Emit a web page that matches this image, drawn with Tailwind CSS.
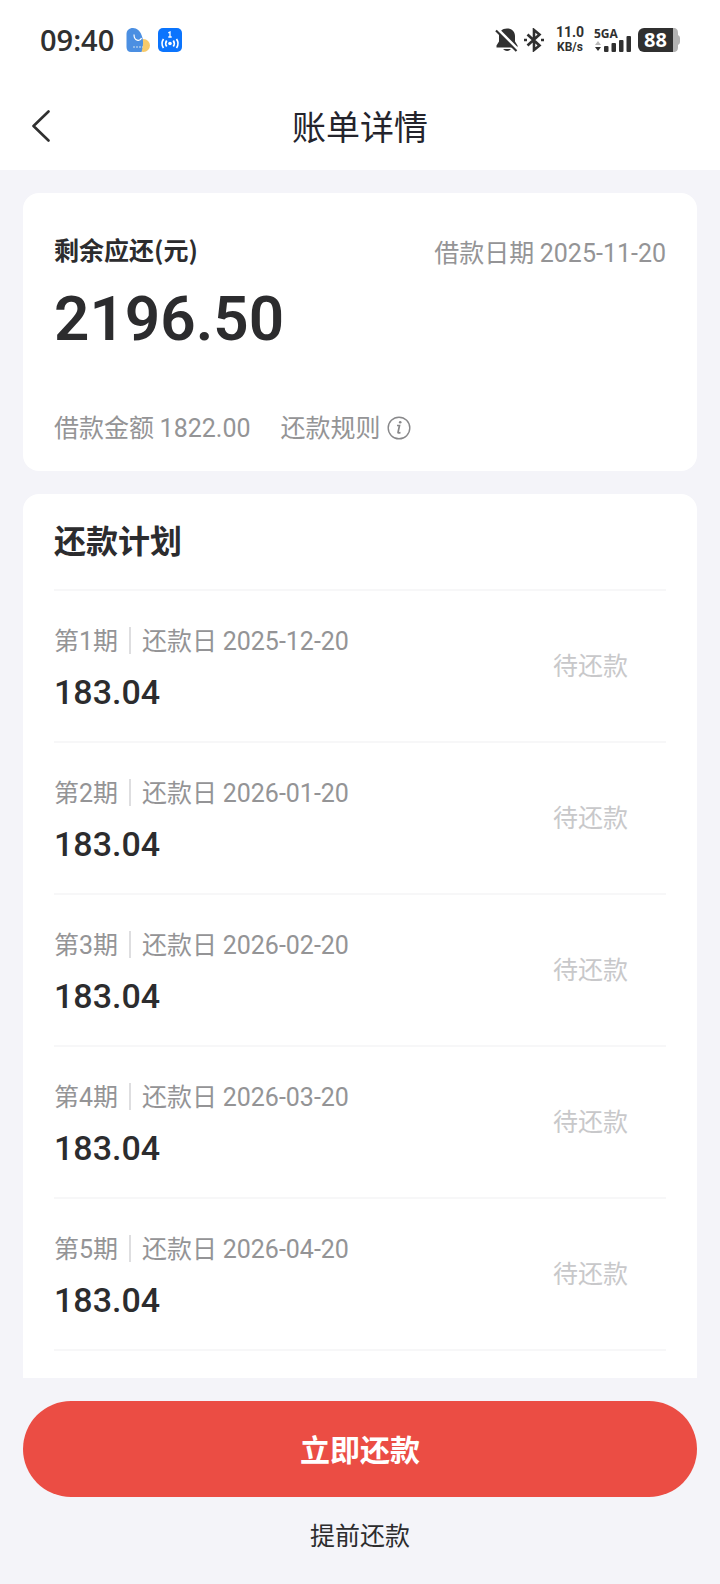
<!DOCTYPE html>
<html lang="zh-CN">
<head>
  <meta charset="UTF-8" />
  <meta name="viewport" content="width=device-width, initial-scale=1" />
  <title>账单详情</title>
  <script src="https://cdn.jsdelivr.net/npm/@tailwindcss/browser@4"></script>
  <style>
    body {
      font-family: 'Noto Sans CJK SC', sans-serif;
    }
  </style>
</head>
<body class="bg-[#f4f4f9] h-screen flex flex-col overflow-hidden text-[#2c2c2e]">
  <header class="bg-white shrink-0">
    <!-- Status bar -->
    <div class="h-20 px-10 flex items-center justify-between font-['Open_Sans',sans-serif] text-[#303030]">
      <div class="flex items-center">
        <span class="text-[29px] font-semibold leading-8">09:40</span>
        <svg class="w-6 h-6 ml-3" viewBox="0 0 24 24">
          <circle cx="17.500" cy="17.500" r="6.500" fill="#f7ca6b" />
          <path d="M7 0C11 0 14 3 15.500 7C17 11 18 15 15.500 24H5C2 24 0.500 22 0.500 19V6C0.500 2.500 3 0 7 0Z" fill="#4b8fe2" />
          <path d="M8 6.500C8 13 14 14 15.500 10" fill="none" stroke="#fff" stroke-width="1.200" />
          <path d="M7 19H17" stroke="#d5e3ef" stroke-width="1" stroke-dasharray="2 1" />
        </svg>
        <svg class="w-6 h-6 ml-2" viewBox="0 0 24 24">
          <rect width="24" height="24" rx="5" fill="#0b74fd" />
          <path d="M10.300 4.800L12 4V9M10.300 9H13.700" fill="none" stroke="#fff" stroke-width="1.300" />
          <circle cx="12" cy="15.500" r="1.800" fill="#fff" />
          <path d="M8.700 12.500Q6.700 15.500 8.700 18.500M15.300 12.500Q17.300 15.500 15.300 18.500M5.500 11Q2.500 15.500 5.500 20M18.500 11Q21.500 15.500 18.500 20" fill="none" stroke="#fff" stroke-width="1.700" />
        </svg>
      </div>
      <div class="flex items-center">
        <svg class="w-6 h-6" viewBox="0 0 24 24" fill="#303030">
          <path d="M12 0.500C17 0.500 20 4 20 8V13.500L22.500 17.500V19.500H1.500V17.500L4 13.500V8C4 4 7 0.500 12 0.500Z" />
          <path d="M8 21H16Q12 25 8 21Z" />
          <path d="M2.500 1L23.500 22" stroke="#fff" stroke-width="3" />
          <path d="M1 2.500L21.500 23" stroke="#303030" stroke-width="2.200" />
        </svg>
        <svg class="w-5 h-6 ml-[5px]" viewBox="0 0 20 24" fill="none" stroke="#303030" stroke-width="2.600">
          <path d="M3.500 6.500L15.500 17.500L10 22V2L15.500 6.500L3.500 17.500" />
          <path d="M0 12H3M17 12H20" stroke-width="2.600" />
        </svg>
        <div class="w-8 ml-2.5 text-center font-bold font-[Roboto]">
          <p class="text-sm leading-[15px]">11.0</p>
          <p class="text-xs leading-[15px]">KB/s</p>
        </div>
        <div class="w-[38px] ml-2">
          <p class="text-xs leading-3 font-bold">5GA</p>
          <svg class="w-[38px] h-4 -mt-1" viewBox="0 0 38 16" fill="#303030">
            <path d="M1 9L4 5L7 9Z" fill="#b8b8b8" />
            <path d="M1 11H7L4 15Z" />
            <rect x="10" y="10" width="4.500" height="6" rx="1" />
            <rect x="17.500" y="7" width="4.500" height="9" rx="1" />
            <rect x="25" y="4" width="4.500" height="12" rx="1" />
            <rect x="32.500" y="0" width="4.500" height="16" rx="1" />
          </svg>
        </div>
        <div class="flex items-center ml-1.5">
          <div class="w-[35px] h-6 rounded-l-md bg-[#303030] text-white text-xl leading-6 font-bold text-center">88</div>
          <svg class="w-[7px] h-6" viewBox="0 0 7 24" fill="#b3b3b3">
            <path d="M0 0C4 0 5 2 5 5V7Q7 8 7 10V14Q7 16 5 17V19C5 22 4 24 0 24Z" />
          </svg>
        </div>
      </div>
    </div>
    <!-- Nav -->
    <nav class="h-[90px] px-6 pt-0.5 grid grid-cols-[40px_1fr_40px] items-center">
      <button type="button" aria-label="返回" class="w-10 h-12 pl-2 flex items-center">
        <svg class="w-[18px] h-8" viewBox="0 0 18 32" fill="none" stroke="#303030" stroke-width="2.600" stroke-linecap="round" stroke-linejoin="round">
          <path d="M16.500 1.500L1.500 16L16.500 30.500" />
        </svg>
      </button>
      <h1 class="text-[34px] leading-10 text-center text-[#24242c]">账单详情</h1>
    </nav>
  </header>

  <main class="flex-1 min-h-0 overflow-hidden px-[23px] pt-[23px] flex flex-col gap-[23px]">
    <!-- Summary -->
    <section class="bg-white rounded-2xl px-[31px] pt-10 pb-6 h-[278px] shrink-0 flex flex-col">
      <div class="flex items-center justify-between leading-9">
        <h2 class="pb-2 text-[25px] leading-7 font-bold">剩余应还(元)</h2>
        <p class="text-[25px] text-[#949496]">借款日期 <span class="font-[Roboto]">2025-11-20</span></p>
      </div>
      <p class="text-[62px] leading-[94px] font-semibold font-[Roboto]">2196.50</p>
      <div class="mt-auto flex items-baseline text-[25px] leading-9 text-[#949496]">
        <p>借款金额 <span class="font-[Roboto]">1822.00</span></p>
        <button type="button" class="ml-[30px] flex items-center gap-1.5">
          还款规则
          <svg class="w-6 h-7 pt-1" viewBox="0 0 24 24" fill="none" stroke="#88888a">
            <circle cx="12" cy="12" r="10.800" stroke-width="1.400" />
            <path d="M10 9.500H12.500L11 16.500Q11 17.500 13.500 16.500" stroke-width="1.700" />
            <circle cx="13.200" cy="6.300" r="1.300" fill="#88888a" stroke="none" />
          </svg>
        </button>
      </div>
    </section>

    <!-- Repayment plan -->
    <section class="bg-white rounded-t-2xl px-[31px] flex-1">
      <h2 class="h-[97px] pb-1.5 flex items-center text-[32px] font-bold border-b-2 border-[#f7f7f8]">还款计划</h2>
      <ul id="planList"></ul>
    </section>
  </main>

  <footer class="shrink-0 px-[23px] pt-[23px] pb-8 flex flex-col">
    <button type="button" class="h-24 pb-0.5 rounded-full bg-[#eb4d44] text-white text-[30px] font-bold">立即还款</button>
    <button type="button" class="mt-[19px] self-center text-[25px] leading-9">提前还款</button>
  </footer>

  <template id="planRow">
    <li class="h-[152px] flex items-center justify-between border-b-2 border-[#f7f7f8] pr-[38px] pb-[3px]">
      <div class="pt-2">
        <p class="flex items-center text-[25px] leading-9 text-[#949496]">
          <span>第<span data-no class="font-[Roboto]"></span>期</span>
          <span class="w-0.5 h-[27px] mx-[11px] bg-[#dedee0]"></span>
          <span>还款日 <span data-date class="font-[Roboto]"></span></span>
        </p>
        <p data-amount class="mt-2 text-[34px] leading-[48px] font-medium font-[Roboto]"></p>
      </div>
      <span class="text-[25px] text-[#c8c8ca]">待还款</span>
    </li>
  </template>

  <script>
    const plan = [
      { date: '2025-12-20', amount: '183.04' },
      { date: '2026-01-20', amount: '183.04' },
      { date: '2026-02-20', amount: '183.04' },
      { date: '2026-03-20', amount: '183.04' },
      { date: '2026-04-20', amount: '183.04' }
    ];

    const planList = document.getElementById('planList');
    const planRow = document.getElementById('planRow');

    plan.forEach((item, index) => {
      const row = planRow.content.cloneNode(true);
      row.querySelector('[data-no]').textContent = index + 1;
      row.querySelector('[data-date]').textContent = item.date;
      row.querySelector('[data-amount]').textContent = item.amount;
      planList.appendChild(row);
    });
  </script>
</body>
</html>
